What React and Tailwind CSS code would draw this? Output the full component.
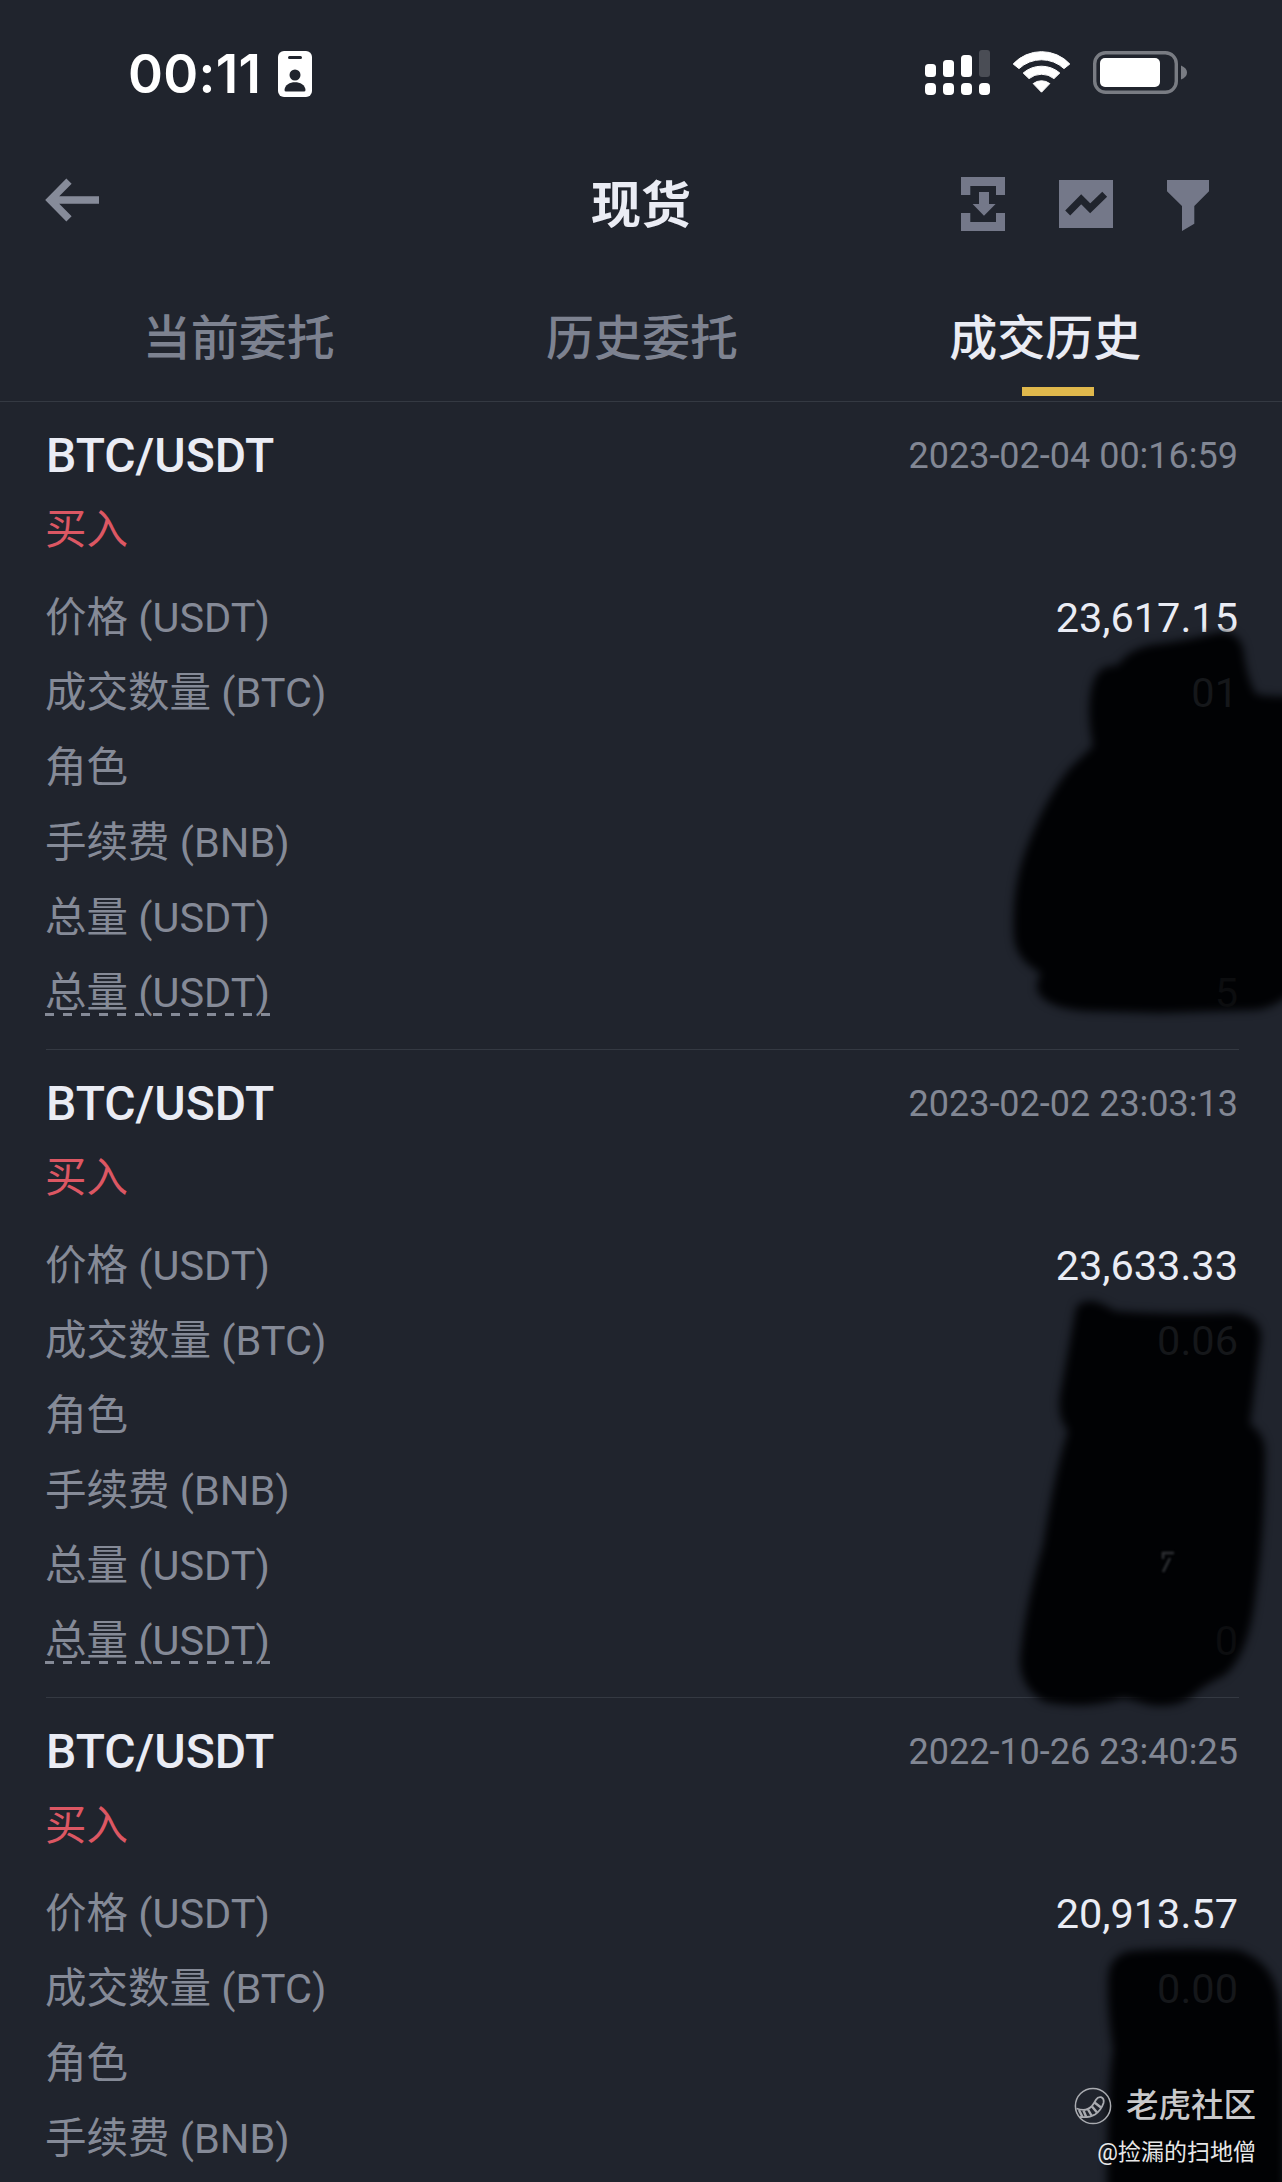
const TABS = ['当前委托', '历史委托', '成交历史'];

const ROW_LABELS = ['价格 (USDT)', '成交数量 (BTC)', '角色', '手续费 (BNB)', '总量 (USDT)', '总量 (USDT)'];

const TRADES = [
  {
    pair: 'BTC/USDT',
    side: '买入',
    time: '2023-02-04 00:16:59',
    price: '23,617.15',
    amount: '01',
    total: '5',
    rows: 6,
    viewBox: '960 402 322 648',
    mask: 'M1122 660 Q1130 650 1150 645 Q1185 641 1212 634 Q1236 627 1243 648 Q1246 675 1255 693 Q1262 697 1295 696 L1295 990 Q1274 1009 1255 1010 L1160 1013 L1085 1011 Q1044 1008 1037 990 Q1036 982 1041 973 Q1016 960 1014 938 Q1011 890 1025 852 Q1045 798 1070 768 L1093 746 Q1086 710 1092 686 Q1098 664 1116 666 Z',
  },
  {
    pair: 'BTC/USDT',
    side: '买入',
    time: '2023-02-02 23:03:13',
    price: '23,633.33',
    amount: '0.06',
    total: '0',
    rows: 6,
    viewBox: '960 1050 322 648',
    mask: 'M1076 1308 Q1080 1300 1094 1301 Q1106 1305 1115 1311 Q1170 1315 1235 1313 Q1263 1318 1261 1340 L1250 1424 Q1264 1434 1265 1450 Q1265 1535 1255 1600 Q1248 1655 1225 1675 Q1203 1685 1190 1698 Q1175 1708 1150 1705 L1124 1698 Q1085 1710 1045 1702 Q1020 1688 1020 1660 Q1024 1610 1043 1545 Q1055 1470 1068 1431 Q1057 1418 1060 1395 Z',
    speck: 'M1163 1559 V1553 H1174 M1170 1558 L1163 1572',
  },
  {
    pair: 'BTC/USDT',
    side: '买入',
    time: '2022-10-26 23:40:25',
    price: '20,913.57',
    amount: '0.00',
    rows: 4,
    viewBox: '960 1698 322 648',
    mask: 'M1108 1980 Q1108 1956 1130 1951 Q1180 1947 1238 1950 Q1274 1962 1279 2000 L1284 2060 L1284 2190 L1107 2190 Q1107 2085 1113 2050 Q1107 2010 1108 1980 Z',
  },
];

function StatusBar() {
  return (
    <div className="flex h-[130px] items-start justify-between pl-[128px] pr-[94px] pt-[50px] text-white">
      <div className="flex items-start">
        <span className="w-[150px] whitespace-nowrap font-[Inter,sans-serif] text-[53px] font-semibold leading-[48px] tracking-[0.3px]">00:11</span>
        <svg width="34" height="46" viewBox="0 0 34 46" className="mt-px">
          <rect width="34" height="46" rx="6" fill="#fff" />
          <rect x="10" y="5" width="14" height="3" rx="1.5" fill="#20242d" />
          <circle cx="17" cy="24" r="5.5" fill="#20242d" />
          <path d="M6.5 39 C7 28.5 27 28.5 27.5 39 Q27.5 40.5 26 40.5 H8 Q6.5 40.5 6.5 39 Z" fill="#20242d" />
        </svg>
      </div>
      <svg width="264" height="48" viewBox="924 50 264 48">
        <g fill="#fff">
          <rect x="925" y="64" width="11" height="13" rx="3.5" />
          <rect x="943" y="60" width="11" height="17" rx="3.5" />
          <rect x="961" y="55" width="11" height="22" rx="3.5" />
          <rect x="979" y="50" width="11" height="27" rx="3" fill="#4a4d55" />
          <rect x="925" y="83" width="11" height="12" rx="4" />
          <rect x="943" y="83" width="11" height="12" rx="4" />
          <rect x="961" y="83" width="11" height="12" rx="4" />
          <rect x="979" y="83" width="11" height="12" rx="4" />
        </g>
        <g fill="#fff" stroke="#fff" strokeWidth="1" strokeLinejoin="round">
          <path d="M1013.2 64 A38.6 38.6 0 0 1 1069.8 64 L1064 68.6 A33 33 0 0 0 1019 68.6 Z" />
          <path d="M1023.2 73 A28 28 0 0 1 1059.8 73 L1054 78.6 A20 20 0 0 0 1029 78.6 Z" />
          <path d="M1033.2 83.6 A13.6 13.6 0 0 1 1049.8 83.6 L1041.5 92.2 Z" />
        </g>
        <rect x="1094.7" y="52.7" width="81.6" height="39.6" rx="11" fill="none" stroke="#797c83" strokeWidth="3.4" />
        <rect x="1100" y="58" width="60" height="29" rx="5" fill="#fff" />
        <path d="M1181 65.5 Q1187 68 1187 72.5 Q1187 77 1181 79.5 Z" fill="#797c83" />
      </svg>
    </div>
  );
}

function Header() {
  return (
    <div className="grid h-[140px] grid-cols-[1fr_100px_1fr] items-center pl-[45px] pr-[45px] pt-[8px]">
      <svg width="56" height="46" viewBox="45 177 56 46" className="relative -top-[4px]">
        <path d="M69 181.2 L50.4 200 L69 218.8 M52 200 H99" fill="none" stroke="#868b99" strokeWidth="7.4" />
      </svg>
      <h1 className="whitespace-nowrap pt-[3px] text-[50px] font-bold leading-[60px] text-[#eaecf4]">现货</h1>
      <svg width="248" height="56" viewBox="961 176 248 56" className="mr-[28px] justify-self-end" fill="#747889">
        <path d="M961 177 H1005 V195 H996 V186 H970.3 V195 H961 Z" />
        <path d="M961 213 H970.3 V222 H996 V213 H1005 V231 H961 Z" />
        <path d="M979 192 H989 V204 H995.6 L984 215.7 L972.6 204 H979 Z" />
        <rect x="1059" y="180" width="54" height="48" />
        <path d="M1067.7 213 L1081.2 199.2 L1090.2 208.3 L1104.7 194.3" fill="none" stroke="#20242d" strokeWidth="7" />
        <path d="M1167 180 H1209 V191.3 L1194.3 206 V223.8 L1182 231 V206 L1167 191.3 Z" />
      </svg>
    </div>
  );
}

function Tabs() {
  return (
    <div className="grid h-[132px] grid-cols-3 border-b border-[#343942] pl-[37px] pr-[35px]">
      {TABS.map((tab, i) => (
        <div
          key={tab}
          className={`relative pt-[39px] text-center text-[48px] font-medium leading-[60px] ${i === 2 ? 'text-[#eaecf4]' : 'text-[#7d8290]'}`}
        >
          {tab}
          {i === 2 && <span className="absolute left-[178px] top-[117px] h-[9px] w-[72px] bg-[#e0b84c]" />}
        </div>
      ))}
    </div>
  );
}

function Trade({ trade }) {
  return (
    <section className="relative h-[648px] pl-[45px] pr-[44px] pt-[16px]">
      <div className="flex h-[76px] items-center justify-between">
        <h2 className="pl-px text-[48px] font-medium text-[#eaecf4]">{trade.pair}</h2>
        <time className="text-[36px] text-[#828794]">{trade.time}</time>
      </div>
      <p className="h-[86.5px] pt-px text-[41.5px] leading-[70px] text-[#dc5763]">{trade.side}</p>
      {ROW_LABELS.slice(0, trade.rows).map((label, i) => (
        <div key={i} className="flex h-[75px] items-center justify-between text-[41.5px] leading-[60px]">
          <span className="relative text-[#858a97]">
            {label}
            {i === 5 && (
              <span className="absolute left-0 right-0 top-[50px] h-[3px] bg-[repeating-linear-gradient(90deg,#858a97_0px,#858a97_9px,transparent_9px,transparent_18px)]" />
            )}
          </span>
          {i === 0 && <span className="text-[#eaecf4]">{trade.price}</span>}
          {i === 1 && <span className="relative z-10 text-[#15171a]">{trade.amount}</span>}
          {i === 5 && <span className="relative z-10 text-[#0c0d0f]">{trade.total}</span>}
        </div>
      ))}
      <div className="absolute bottom-0 left-[46px] right-[43px] h-px bg-[#343942]" />
      {/* scribbled-out amounts */}
      <svg className="absolute right-0 top-0 h-[648px] w-[322px] overflow-visible" viewBox={trade.viewBox}>
        <path d={trade.mask} fill="#010204" className="blur-[4px]" />
        {trade.speck && <path d={trade.speck} fill="none" stroke="#303236" strokeWidth="2.5" className="blur-[1px]" />}
      </svg>
    </section>
  );
}

function Watermark() {
  return (
    <div className="absolute bottom-[13px] right-[26px] z-20 flex flex-col items-end text-[#e8e8e8]">
      <div className="flex items-center gap-[14px]">
        <svg width="38" height="38" viewBox="0 0 38 38" fill="none" stroke="#a9abb0" strokeWidth="1.5">
          <circle cx="19" cy="19" r="17.6" />
          <path d="M2.5 21.5 Q12 25 17.5 19.5 Q20 16.5 22 12.8 Q24 9.5 27 10.2 Q30.5 11.5 29.5 16 Q27 23.5 21 27.5 Q15 31 6 30" strokeWidth="1.8" />
          <path d="M5 23 L8.5 30 M9.5 23.5 L12 29.5 M14 22.5 L17.5 28.5 M18 19.5 L23 25.5 M20.5 15.5 L27 20.5" strokeWidth="2.4" />
        </svg>
        <span className="text-[32.5px] font-medium leading-[44px] text-[#c8c8ca]">老虎社区</span>
      </div>
      <span className="mt-[9px] text-[23px] leading-[32px]">@捡漏的扫地僧</span>
    </div>
  );
}

export default function App() {
  return (
    <div className="relative h-[2182px] w-[1282px] overflow-hidden bg-[#20242d] font-[Roboto,'Noto_Sans_CJK_SC',sans-serif]">
      <StatusBar />
      <Header />
      <Tabs />
      {TRADES.map((trade) => (
        <Trade key={trade.time} trade={trade} />
      ))}
      <Watermark />
    </div>
  );
}
